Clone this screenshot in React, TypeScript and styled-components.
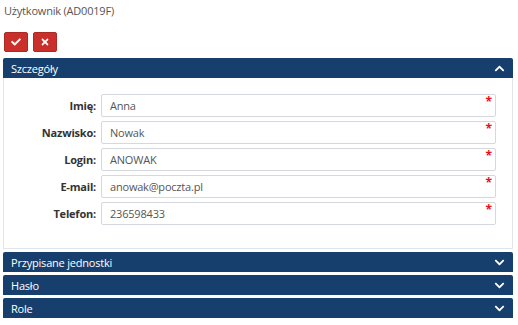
import React from 'react';
import styled, { createGlobalStyle } from 'styled-components';
import { FaCheck, FaTimes, FaChevronUp, FaChevronDown } from 'react-icons/fa';

const GlobalStyle = createGlobalStyle`
  body {
    margin: 0;
    background: #fff;
    font-family: "Open Sans", "Noto Sans", sans-serif;
    font-size: 11px;
    color: #555;
  }
`;

const fields = [
  { label: 'Imię:', value: 'Anna' },
  { label: 'Nazwisko:', value: 'Nowak' },
  { label: 'Login:', value: 'ANOWAK' },
  { label: 'E-mail:', value: 'anowak@poczta.pl' },
  { label: 'Telefon:', value: '236598433' },
];

const collapsed = ['Przypisane jednostki', 'Hasło', 'Role'];

export default function App() {
  return (
    <Page>
      <GlobalStyle />
      <Title>Użytkownik (AD0019F)</Title>
      <Toolbar>
        <RedButton title="Zapisz">
          <FaCheck size={10} />
        </RedButton>
        <RedButton title="Anuluj">
          <FaTimes size={10} />
        </RedButton>
      </Toolbar>
      <Panels>
        <Panel>
          <PanelHeader>
            <span>Szczegóły</span>
            <FaChevronUp size={11} />
          </PanelHeader>
          <PanelBody>
            {fields.map((f) => (
              <FormRow key={f.label}>
                <Label>{f.label}</Label>
                <InputWrap>
                  <Input defaultValue={f.value} />
                  <Required>*</Required>
                </InputWrap>
              </FormRow>
            ))}
          </PanelBody>
        </Panel>
        {collapsed.map((t) => (
          <PanelHeader key={t}>
            <span>{t}</span>
            <FaChevronDown size={11} />
          </PanelHeader>
        ))}
      </Panels>
    </Page>
  );
}

const Page = styled.div`
  padding: 3px 5px 0 3px;
  box-sizing: border-box;
  width: 518px;
`;

const Title = styled.div`
  padding-left: 1px;
  height: 16px;
  line-height: 16px;
  color: #555;
  letter-spacing: -0.2px;
`;

const Toolbar = styled.div`
  display: flex;
  gap: 5px;
  margin-top: 13px;
  padding-left: 1px;
`;

const RedButton = styled.button`
  width: 24px;
  height: 20px;
  padding: 0;
  border: 1px solid #ac2925;
  border-radius: 2px;
  background: #c9302c;
  color: #fff;
  display: flex;
  align-items: center;
  justify-content: center;
  cursor: pointer;
`;

const Panels = styled.div`
  display: flex;
  flex-direction: column;
  gap: 3px;
  margin-top: 6px;
`;

const Panel = styled.div`
  display: flex;
  flex-direction: column;
`;

const PanelHeader = styled.div`
  height: 20px;
  box-sizing: border-box;
  background: #173f6e;
  border-radius: 2px 2px 0 0;
  color: #fff;
  display: flex;
  align-items: center;
  justify-content: space-between;
  padding: 0 8px 0 8px;
  font-size: 11px;
  letter-spacing: -0.2px;
  cursor: pointer;
`;

const PanelBody = styled.div`
  border: 1px solid #e1e4e8;
  border-top: none;
  padding: 16px 16px 23px 0;
  display: flex;
  flex-direction: column;
  gap: 4px;
`;

const FormRow = styled.div`
  display: flex;
  align-items: center;
  gap: 5px;
`;

const Label = styled.label`
  width: 92px;
  text-align: right;
  font-weight: 700;
  color: #333;
  letter-spacing: -0.2px;
`;

const InputWrap = styled.div`
  position: relative;
  flex: 1;
`;

const Input = styled.input`
  width: 100%;
  box-sizing: border-box;
  height: 23px;
  border: 1px solid #d5d9de;
  border-radius: 2px;
  padding: 0 8px;
  font-family: inherit;
  font-size: 11px;
  letter-spacing: -0.2px;
  color: #555;
  outline: none;
`;

const Required = styled.span`
  position: absolute;
  right: 4px;
  top: 2px;
  color: #e8101a;
  font-size: 12px;
  font-weight: 700;
  line-height: 12px;
`;
